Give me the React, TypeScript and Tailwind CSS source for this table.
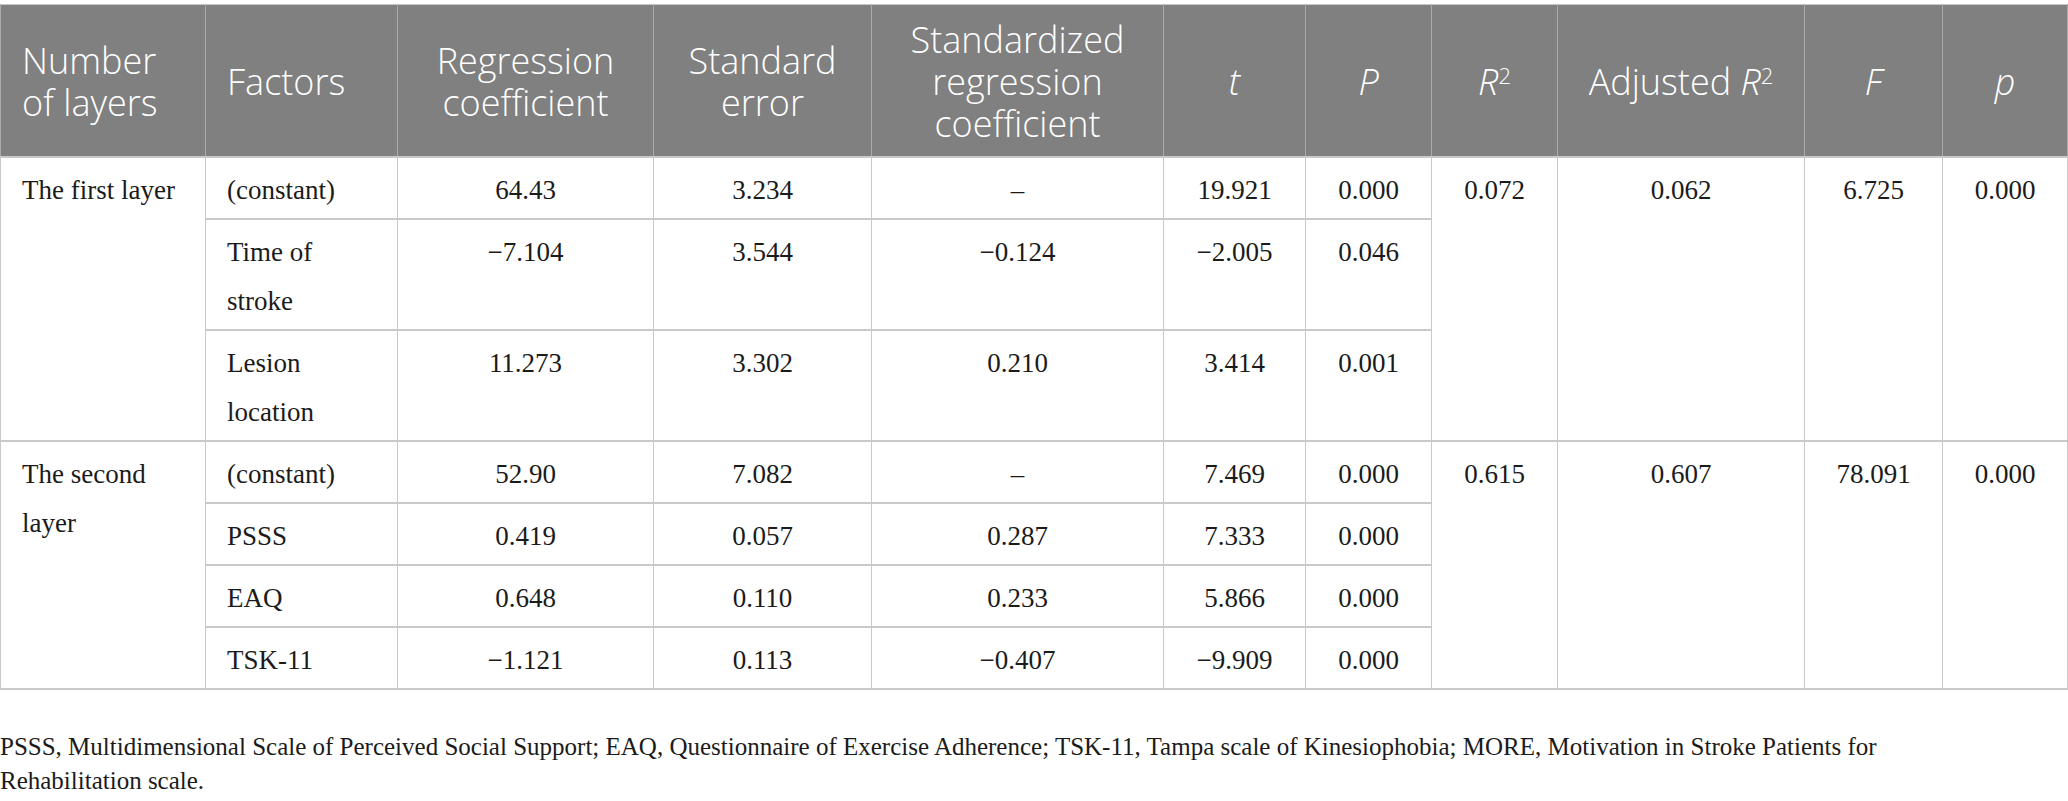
import React from 'react';

type Row = {
  factor: React.ReactNode;
  coef: string;
  se: string;
  std: string;
  t: string;
  P: string;
};

const layers: {
  name: string;
  r2: string;
  adj: string;
  F: string;
  p: string;
  rows: Row[];
}[] = [
  {
    name: 'The first layer',
    r2: '0.072',
    adj: '0.062',
    F: '6.725',
    p: '0.000',
    rows: [
      { factor: '(constant)', coef: '64.43', se: '3.234', std: '–', t: '19.921', P: '0.000' },
      { factor: 'Time of stroke', coef: '−7.104', se: '3.544', std: '−0.124', t: '−2.005', P: '0.046' },
      { factor: 'Lesion location', coef: '11.273', se: '3.302', std: '0.210', t: '3.414', P: '0.001' },
    ],
  },
  {
    name: 'The second layer',
    r2: '0.615',
    adj: '0.607',
    F: '78.091',
    p: '0.000',
    rows: [
      { factor: '(constant)', coef: '52.90', se: '7.082', std: '–', t: '7.469', P: '0.000' },
      { factor: 'PSSS', coef: '0.419', se: '0.057', std: '0.287', t: '7.333', P: '0.000' },
      { factor: 'EAQ', coef: '0.648', se: '0.110', std: '0.233', t: '5.866', P: '0.000' },
      { factor: 'TSK-11', coef: '−1.121', se: '0.113', std: '−0.407', t: '−9.909', P: '0.000' },
    ],
  },
];

const th = 'h-[152px] border-x border-[#a9aaa9] px-[21px] pt-[3px] align-middle font-light';
const td = 'border-x border-b-2 border-[#c9c9c9] px-[21px] pt-[8px] pb-[3px] align-top';

const App: React.FC = () => {
  return (
    <div className="w-[2068px] bg-white pt-[4px] text-[#1b1b1b]">
      <table className="w-full table-fixed border-collapse border border-[#c9c9c9]">
        <colgroup>
          <col className="w-[205px]" />
          <col className="w-[192px]" />
          <col className="w-[256px]" />
          <col className="w-[218px]" />
          <col className="w-[292px]" />
          <col className="w-[142px]" />
          <col className="w-[126px]" />
          <col className="w-[126px]" />
          <col className="w-[247px]" />
          <col className="w-[138px]" />
          <col />
        </colgroup>
        <thead>
          <tr className="bg-[#7f807f] text-white text-[36px] leading-[42px] font-['Open_Sans',sans-serif] border-b-2 border-[#c9c9c9]">
            <th className={`${th} text-left`}>Number of layers</th>
            <th className={`${th} text-left`}>Factors</th>
            <th className={`${th} text-center`}>Regression coefficient</th>
            <th className={`${th} text-center`}>Standard error</th>
            <th className={`${th} text-center`}>Standardized regression coefficient</th>
            <th className={`${th} text-center italic`}>t</th>
            <th className={`${th} text-center italic`}>P</th>
            <th className={`${th} text-center`}>
              <span className="italic">R</span>
              <sup className="text-[22px]">2</sup>
            </th>
            <th className={`${th} text-center`}>
              Adjusted <span className="italic">R</span>
              <sup className="text-[22px]">2</sup>
            </th>
            <th className={`${th} text-center italic`}>F</th>
            <th className={`${th} text-center italic`}>p</th>
          </tr>
        </thead>
        <tbody className="font-['Liberation_Serif',serif] text-[27px] leading-[49px]">
          {layers.map((layer) =>
            layer.rows.map((row, i) => (
              <tr key={layer.name + i}>
                {i === 0 && (
                  <td rowSpan={layer.rows.length} className={`${td} text-left`}>
                    {layer.name}
                  </td>
                )}
                <td className={`${td} text-left`}>{row.factor}</td>
                <td className={`${td} text-center`}>{row.coef}</td>
                <td className={`${td} text-center`}>{row.se}</td>
                <td className={`${td} text-center`}>{row.std}</td>
                <td className={`${td} text-center`}>{row.t}</td>
                <td className={`${td} text-center`}>{row.P}</td>
                {i === 0 && (
                  <>
                    <td rowSpan={layer.rows.length} className={`${td} text-center`}>{layer.r2}</td>
                    <td rowSpan={layer.rows.length} className={`${td} text-center`}>{layer.adj}</td>
                    <td rowSpan={layer.rows.length} className={`${td} text-center`}>{layer.F}</td>
                    <td rowSpan={layer.rows.length} className={`${td} text-center`}>{layer.p}</td>
                  </>
                )}
              </tr>
            ))
          )}
        </tbody>
      </table>
      <p className="mt-[40px] w-[2000px] font-['Liberation_Serif',serif] text-[25px] leading-[34px]">
        PSSS, Multidimensional Scale of Perceived Social Support; EAQ, Questionnaire of Exercise Adherence; TSK-11, Tampa
        scale of Kinesiophobia; MORE, Motivation in Stroke Patients for Rehabilitation scale.
      </p>
    </div>
  );
};

export default App;
